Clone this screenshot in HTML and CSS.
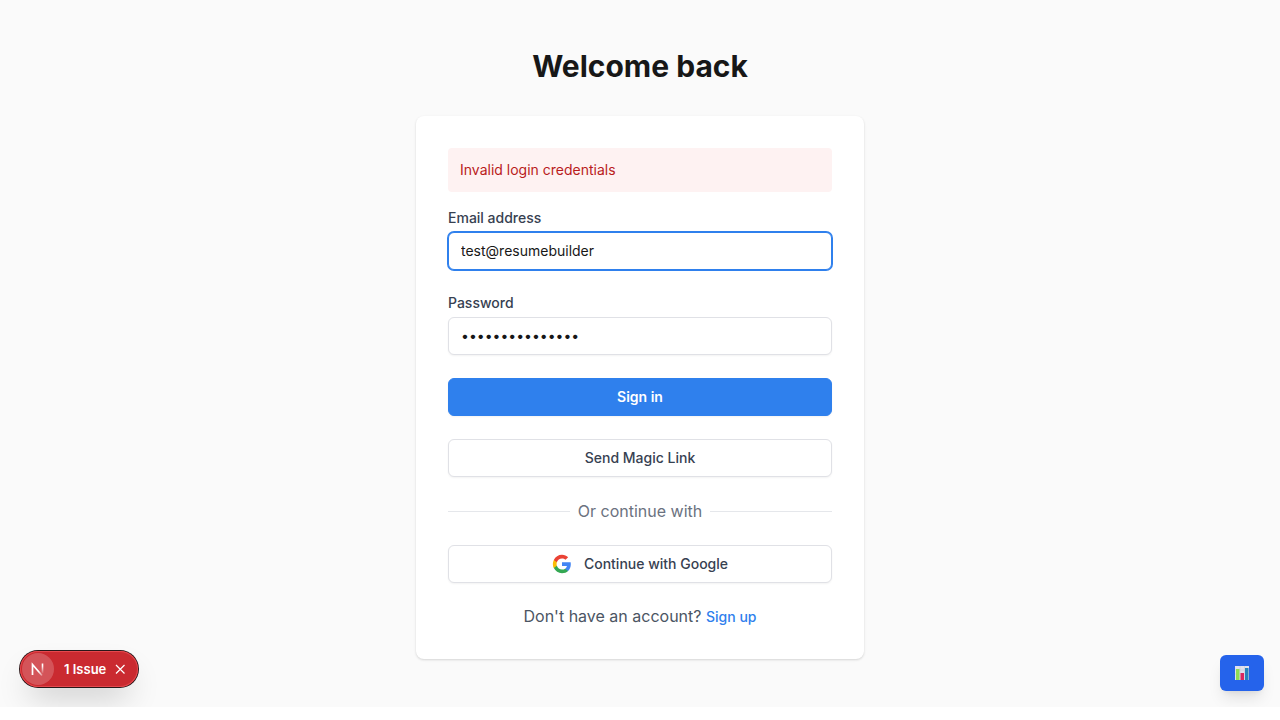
FILE: index.html
```html
<!DOCTYPE html>
<html lang="en">
<head>
<meta charset="utf-8">
<meta name="viewport" content="width=device-width, initial-scale=1">
<title>Sign in</title>
<link rel="stylesheet" href="styles.css">
</head>
<body>
<main class="page">
  <h1 class="title">Welcome back</h1>
  <section class="card">
    <p class="alert" role="alert">Invalid login credentials</p>
    <form class="form">
      <div class="field">
        <label class="label" for="email">Email address</label>
        <input class="input input-active" id="email" type="text" value="test@resumebuilder">
      </div>
      <div class="field">
        <label class="label" for="password">Password</label>
        <input class="input" id="password" type="password" value="password1234567">
      </div>
      <button class="button button-primary" type="submit">Sign in</button>
      <button class="button" type="button">Send Magic Link</button>
      <div class="divider"><span>Or continue with</span></div>
      <button class="button button-google" type="button">
        <svg class="google-icon" viewBox="0 0 24 24" aria-hidden="true">
          <path fill="#4285f4" d="M22.56 12.25c0-.78-.07-1.53-.2-2.25H12v4.26h5.92c-.26 1.37-1.04 2.53-2.21 3.31v2.77h3.57c2.08-1.92 3.28-4.74 3.28-8.09z"/>
          <path fill="#34a853" d="M12 23c2.97 0 5.46-.98 7.28-2.66l-3.57-2.77c-.98.66-2.23 1.06-3.71 1.06-2.86 0-5.29-1.93-6.16-4.53H2.18v2.84C3.99 20.53 7.7 23 12 23z"/>
          <path fill="#fbbc05" d="M5.84 14.09c-.22-.66-.35-1.36-.35-2.09s.13-1.43.35-2.09V7.07H2.18C1.43 8.55 1 10.22 1 12s.43 3.45 1.18 4.93l2.85-2.22.81-.62z"/>
          <path fill="#ea4335" d="M12 5.38c1.62 0 3.06.56 4.21 1.64l3.15-3.15C17.45 2.09 14.97 1 12 1 7.7 1 3.99 3.47 2.18 7.07l3.66 2.84c.87-2.6 3.3-4.53 6.16-4.53z"/>
        </svg>
        Continue with Google
      </button>
      <p class="signup">Don't have an account? <a class="link" href="#">Sign up</a></p>
    </form>
  </section>

  <div class="issues">
    <button class="issues-logo" type="button" aria-label="Open developer tools">
      <svg width="32" height="32" viewBox="0 0 32 32" fill="none" aria-hidden="true">
        <defs>
          <linearGradient id="fade-diagonal" gradientUnits="userSpaceOnUse" x1="17" y1="18" x2="21" y2="23">
            <stop stop-color="#fff"/><stop offset="1" stop-color="#fff" stop-opacity="0.2"/>
          </linearGradient>
          <linearGradient id="fade-stem" gradientUnits="userSpaceOnUse" x1="20" y1="13" x2="20" y2="21">
            <stop stop-color="#fff"/><stop offset="1" stop-color="#fff" stop-opacity="0"/>
          </linearGradient>
        </defs>
        <path d="M10.500 22V11.500L20 22.500" stroke="url(#fade-diagonal)" stroke-width="1.700"/>
        <path d="M20.500 10.500V20.500" stroke="url(#fade-stem)" stroke-width="1.600"/>
      </svg>
    </button>
    <button class="issues-open" type="button">1 Issue</button>
    <button class="issues-close" type="button" aria-label="Dismiss">
      <svg width="12" height="12" viewBox="0 0 12 12" fill="none" stroke="#fff" stroke-width="1.200" aria-hidden="true"><path d="M2 2l8.500 8.500M10.500 2L2 10.500"/></svg>
    </button>
  </div>

  <button class="stats" type="button" aria-label="Statistics">
    <svg width="14" height="14" viewBox="0 0 14 14" aria-hidden="true">
      <path fill="#dfe1ed" d="M0 0h14v14H0z"/>
      <path stroke="#c8cadb" stroke-width=".6" d="M0 4h14M0 8h14M5 0v14M9.500 0v14"/>
      <path fill="#8fdc55" d="M1 3h3.500v11H1z"/>
      <path fill="#d9265f" d="M5.500 7h3.500v7H5.500z"/>
      <path fill="#2583bd" d="M10 2h3.500v12H10z"/>
    </svg>
  </button>
</main>
</body>
</html>
```

FILE: styles.css
```css
* {
  box-sizing: border-box;
}

body {
  margin: 0;
  background: #fff;
  font-family: Inter, "Liberation Sans", sans-serif;
  font-size: 16px;
  color: #171717;
}

button,
input {
  font: inherit;
}

.page {
  position: relative;
  overflow: hidden;
  padding: 48px 16px;
  background: #fafafa;
}

.title {
  margin: 0 0 32px;
  font-size: 30px;
  line-height: 36px;
  font-weight: 700;
  text-align: center;
  color: #171717;
}

.card {
  max-width: 448px;
  margin: 0 auto;
  padding: 32px;
  border-radius: 8px;
  background: #fff;
  box-shadow: 0 1px 3px rgba(0, 0, 0, 0.1), 0 1px 2px rgba(0, 0, 0, 0.06);
}

.alert {
  margin: 0 0 16px;
  padding: 12px;
  border-radius: 4px;
  background: #fef2f2;
  color: #b91c1c;
  font-size: 14px;
  line-height: 20px;
}

.form {
  display: flex;
  flex-direction: column;
  gap: 23px;
}

.field {
  display: flex;
  flex-direction: column;
  gap: 4px;
}

.label {
  font-size: 14px;
  line-height: 20px;
  font-weight: 500;
  color: #374151;
}

.input,
.button {
  width: 100%;
  padding: 8px 12px;
  border: 1px solid #e0e1e6;
  border-radius: 6px;
  background: #fff;
  font-size: 14px;
  line-height: 20px;
  box-shadow: 0 1px 2px rgba(0, 0, 0, 0.05);
}

.input {
  height: 38px;
  padding: 7px 12px 9px;
  color: #171717;
  outline: none;
}

.input-active {
  border-color: #2f80ed;
  box-shadow: 0 0 0 1px #2f80ed;
}

.button {
  display: flex;
  align-items: center;
  justify-content: center;
  gap: 12px;
  font-weight: 500;
  color: #374151;
  cursor: pointer;
}

.button-primary {
  border-color: #2f80ed;
  background: #2f80ed;
  color: #fff;
  font-weight: 600;
}

.google-icon {
  width: 20px;
  height: 20px;
}

.divider {
  display: flex;
  align-items: center;
  gap: 8px;
  line-height: 22px;
  color: #6b7280;
}

.divider::before,
.divider::after {
  content: "";
  flex: 1;
  height: 1px;
  background: #e5e7eb;
}

.signup {
  margin: 0;
  line-height: 21px;
  text-align: center;
  color: #4b5563;
}

.link {
  font-size: 14px;
  font-weight: 500;
  color: #2f80ed;
  text-decoration: none;
}

.issues {
  position: absolute;
  left: 20px;
  bottom: 20px;
  display: flex;
  align-items: center;
  height: 36px;
  padding: 2px;
  border-radius: 18px;
  background: #ca2a30;
  box-shadow: inset 0 0 0 1px #e5484d, 0 0 0 1px #2b1719, 0 16px 32px -8px rgba(0, 0, 0, 0.24);
}

.issues button {
  display: flex;
  align-items: center;
  justify-content: center;
  padding: 0;
  border: 0;
  background: none;
  color: #fff;
  cursor: pointer;
}

.issues .issues-logo {
  width: 32px;
  height: 32px;
  border-radius: 50%;
  background: rgba(255, 255, 255, 0.2);
}

.issues .issues-open {
  padding: 0 4px 0 10px;
  font-size: 13px;
  font-weight: 600;
}

.issues .issues-close {
  width: 20px;
  height: 20px;
  margin-right: 6px;
}

.stats {
  position: absolute;
  right: 16px;
  bottom: 16px;
  display: flex;
  align-items: center;
  justify-content: center;
  width: 44px;
  height: 36px;
  padding: 0;
  border: 0;
  border-radius: 6px;
  background: #2563eb;
  box-shadow: 0 10px 15px -3px rgba(0, 0, 0, 0.1), 0 4px 6px -4px rgba(0, 0, 0, 0.1);
  cursor: pointer;
}
```
